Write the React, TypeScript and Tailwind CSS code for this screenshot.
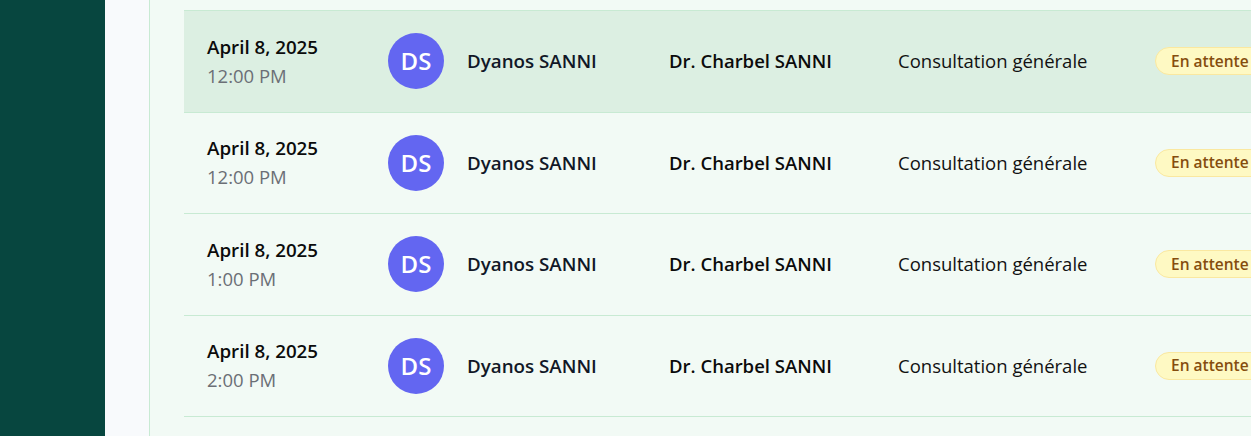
import React from "react";

type Appointment = {
  date: string;
  time: string;
  patient: string;
  initials: string;
  doctor: string;
  type: string;
  status: string;
};

const appointments: Appointment[] = [
  { date: "April 8, 2025", time: "12:00 PM", patient: "Dyanos SANNI", initials: "DS", doctor: "Dr. Charbel SANNI", type: "Consultation générale", status: "En attente" },
  { date: "April 8, 2025", time: "12:00 PM", patient: "Dyanos SANNI", initials: "DS", doctor: "Dr. Charbel SANNI", type: "Consultation générale", status: "En attente" },
  { date: "April 8, 2025", time: "1:00 PM", patient: "Dyanos SANNI", initials: "DS", doctor: "Dr. Charbel SANNI", type: "Consultation générale", status: "En attente" },
  { date: "April 8, 2025", time: "2:00 PM", patient: "Dyanos SANNI", initials: "DS", doctor: "Dr. Charbel SANNI", type: "Consultation générale", status: "En attente" },
];

function Row({ a, active }: { a: Appointment; active?: boolean }) {
  return (
    <div
      className={`flex items-center h-[101.5px] border-b border-[#c8ead3] pl-[23px] ${
        active ? "bg-[#dcefe2]" : ""
      }`}
    >
      <div className="w-[181px] shrink-0">
        <div className="text-[18.75px] leading-[28px] font-semibold text-[#0b0b0b]">{a.date}</div>
        <div className="text-[18.5px] leading-[28px] mt-[1px] text-[#6b6f76]">{a.time}</div>
      </div>
      <div className="w-[281px] shrink-0 flex items-center gap-[23px]">
        <div className="w-14 h-14 rounded-full bg-[#6366f1] flex items-center justify-center text-white text-[24px] font-semibold">
          {a.initials}
        </div>
        <span className="text-[18.75px] font-semibold text-[#111827]">{a.patient}</span>
      </div>
      <div className="w-[229px] shrink-0 text-[18.5px] font-semibold text-[#0b0b0b]">{a.doctor}</div>
      <div className="w-[257px] shrink-0 text-[18.5px] text-[#111]">{a.type}</div>
      <div className="shrink-0">
        <span className="inline-flex items-center h-7 px-[15px] rounded-full bg-[#fef9c3] border border-[#fae8a0] text-[15.5px] font-semibold text-[#854d0e] whitespace-nowrap">
          {a.status}
        </span>
      </div>
    </div>
  );
}

export default function App() {
  return (
    <div
      className="flex h-[436px] w-[1251px] overflow-hidden"
      style={{ fontFamily: '"Open Sans", "Noto Sans", sans-serif' }}
    >
      <aside className="w-[105px] shrink-0 bg-[#07463f]" />
      <div className="w-[45px] shrink-0 bg-[#f8fafc] border-r border-[#c8ead3]" />
      <main className="flex-1 min-w-0 bg-[#f2faf5] pl-[34px] pt-[10px] overflow-hidden">
        <div className="w-[1200px] border-t border-[#c8ead3]">
          {appointments.map((a, i) => (
            <Row key={i} a={a} active={i === 0} />
          ))}
        </div>
      </main>
    </div>
  );
}
